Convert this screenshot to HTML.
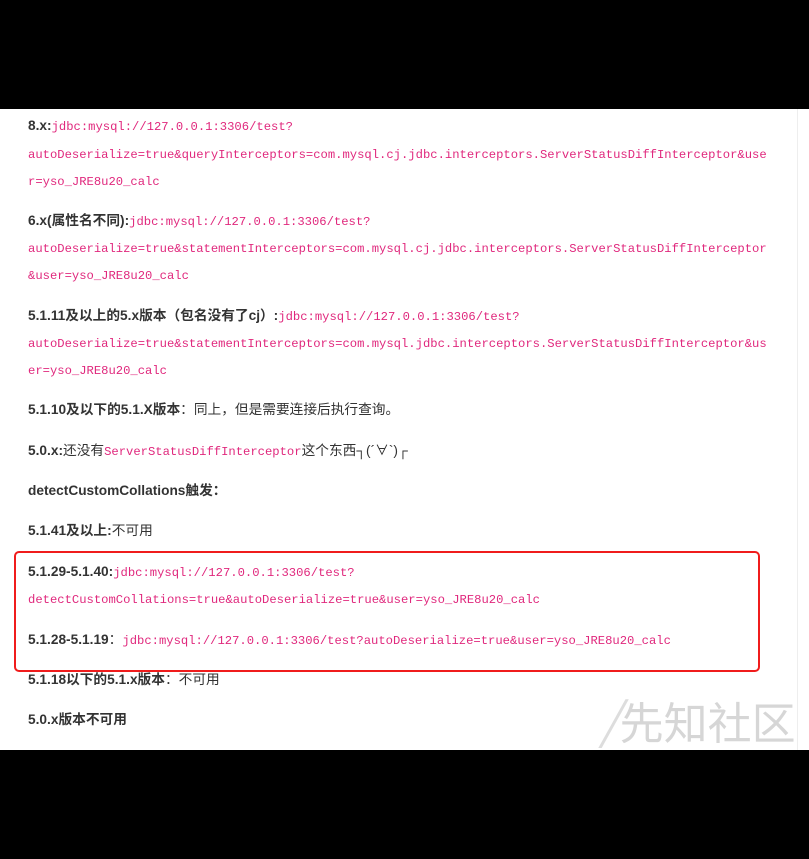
<!DOCTYPE html>
<html><head><meta charset="utf-8"><style>
body{margin:0;width:809px;height:859px;background:#000;position:relative;overflow:hidden;font-family:"Liberation Sans","Noto Sans CJK SC",sans-serif;}
#pg{position:absolute;left:0;top:109px;width:809px;height:641px;background:#fff;}
.l{position:absolute;left:28px;white-space:nowrap;font-size:13.7px;color:#333;line-height:18px;}
b{font-weight:bold;color:#333}
.c{font-family:"Liberation Mono","Noto Sans CJK SC",monospace;font-size:12.2px;color:#e0287d;}
#box{position:absolute;left:14px;top:551px;width:742px;height:117px;border:2px solid #f01c1c;border-radius:5px;}
#logo{position:absolute;left:600px;top:690px;font-size:44px;color:#d6d6d6;font-family:"Noto Sans CJK SC",sans-serif;line-height:56px;}
#rb{position:absolute;left:797px;top:109px;width:1px;height:641px;background:#eee;}
</style></head><body>
<div id="pg"></div><div id="rb"></div>
<div id="logo"><span style="font-size:50px;font-style:italic;color:#ddd">/</span>先知社区</div>
<div class="l" style="top:117px"><b>8.x:</b><span class="c">jdbc:mysql://127.0.0.1:3306/test?</span></div>
<div class="l" style="top:145px"><span class="c">autoDeserialize=true&amp;queryInterceptors=com.mysql.cj.jdbc.interceptors.ServerStatusDiffInterceptor&amp;use</span></div>
<div class="l" style="top:172px"><span class="c">r=yso_JRE8u20_calc</span></div>
<div class="l" style="top:212px"><b>6.x(属性名不同):</b><span class="c">jdbc:mysql://127.0.0.1:3306/test?</span></div>
<div class="l" style="top:239px"><span class="c">autoDeserialize=true&amp;statementInterceptors=com.mysql.cj.jdbc.interceptors.ServerStatusDiffInterceptor</span></div>
<div class="l" style="top:266px"><span class="c">&amp;user=yso_JRE8u20_calc</span></div>
<div class="l" style="top:307px"><b>5.1.11及以上的5.x版本（包名没有了cj）:</b><span class="c">jdbc:mysql://127.0.0.1:3306/test?</span></div>
<div class="l" style="top:334px"><span class="c">autoDeserialize=true&amp;statementInterceptors=com.mysql.jdbc.interceptors.ServerStatusDiffInterceptor&amp;us</span></div>
<div class="l" style="top:361px"><span class="c">er=yso_JRE8u20_calc</span></div>
<div class="l" style="top:401px"><b>5.1.10及以下的5.1.X版本</b>：同上，但是需要连接后执行查询。</div>
<div class="l" style="top:442px"><b>5.0.x:</b>还没有<span class="c">ServerStatusDiffInterceptor</span>这个东西┐(´∀`)┌</div>
<div class="l" style="top:482px"><b>detectCustomCollations触发：</b></div>
<div class="l" style="top:522px"><b>5.1.41及以上:</b>不可用</div>
<div id="box"></div>
<div class="l" style="top:563px"><b>5.1.29-5.1.40:</b><span class="c">jdbc:mysql://127.0.0.1:3306/test?</span></div>
<div class="l" style="top:590px"><span class="c">detectCustomCollations=true&amp;autoDeserialize=true&amp;user=yso_JRE8u20_calc</span></div>
<div class="l" style="top:631px"><b>5.1.28-5.1.19</b>：<span class="c">jdbc:mysql://127.0.0.1:3306/test?autoDeserialize=true&amp;user=yso_JRE8u20_calc</span></div>
<div class="l" style="top:671px"><b>5.1.18以下的5.1.x版本</b>：不可用</div>
<div class="l" style="top:711px"><b>5.0.x版本不可用</b></div>
</body></html>
